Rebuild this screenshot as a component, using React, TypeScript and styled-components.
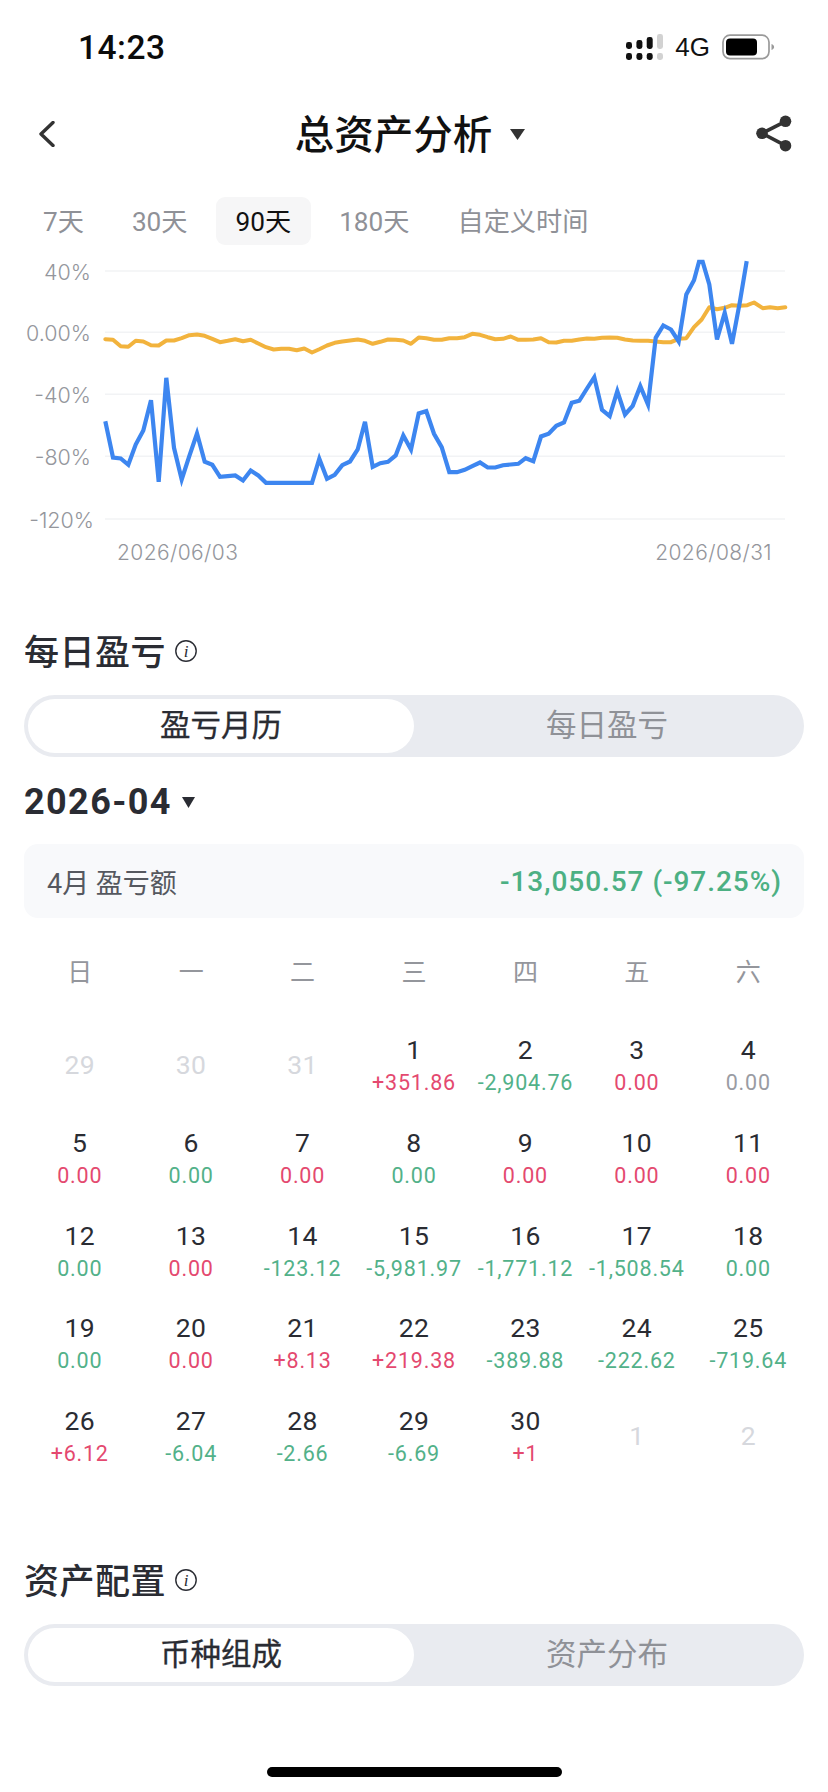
import React from "react";
import styled, { createGlobalStyle } from "styled-components";

const Global = createGlobalStyle`
  html, body { margin: 0; padding: 0; background: #fff; }
  * { box-sizing: border-box; }
`;

const DIGIT_FONT = `Roboto, "Noto Sans CJK SC", sans-serif`;
const CJK_FONT = `"Noto Sans CJK SC", sans-serif`;

const Page = styled.div`
  width: 828px;
  height: 1792px;
  overflow: hidden;
  background: #fff;
  display: flex;
  flex-direction: column;
  font-family: ${CJK_FONT};
`;

const StatusBar = styled.div`
  height: 94px;
  flex: none;
  display: flex;
  align-items: center;
  justify-content: space-between;
  padding: 0 52px 0 78px;
`;
const Clock = styled.span`
  font-family: Roboto, sans-serif;
  font-size: 33.5px;
  font-weight: 500;
  color: #0b0b0b;
  letter-spacing: 0.5px;
`;
const StatusIcons = styled.div`
  display: flex;
  align-items: center;
  gap: 12px;
`;
const Network = styled.span`
  font-family: "Liberation Sans", Arial, sans-serif;
  font-size: 26px;
  color: #111;
`;

const Nav = styled.div`
  height: 80px;
  flex: none;
  display: flex;
  align-items: center;
  justify-content: space-between;
  padding: 0 36px 0 38px;
`;
const TitleGroup = styled.div`
  display: flex;
  align-items: center;
  gap: 18px;
  margin-left: 8px;
`;
const Title = styled.h1`
  margin: 0 0 5px;
  font-family: ${CJK_FONT};
  font-size: 39.5px;
  font-weight: 500;
  line-height: 1;
  color: #111;
`;

const Tabs = styled.div`
  display: flex;
  gap: 8px;
  margin: 23px 0 0 23px;
`;
const Tab = styled.div<{ $active?: boolean }>`
  height: 48px;
  padding: 0 20px 3px;
  display: flex;
  align-items: center;
  border-radius: 9px;
  font-family: ${DIGIT_FONT};
  font-size: 26.2px;
  color: ${(p) => (p.$active ? "#111" : "#8f9197")};
  background: ${(p) => (p.$active ? "#f6f6f7" : "transparent")};
`;

const ChartSvg = styled.svg`
  display: block;
  flex: none;
  margin-top: 5px;
`;
const AxisText = styled.text`
  font-family: "Inter", sans-serif;
  font-weight: 300;
  font-size: 21.5px;
  fill: #94969c;
`;
const DateText = styled(AxisText)`
  font-size: 21px;
  letter-spacing: 0.4px;
`;

const SectionHead = styled.div<{ $top: number }>`
  height: 40px;
  flex: none;
  margin: ${(p) => p.$top}px 0 0 24px;
  display: flex;
  align-items: center;
  gap: 8px;
`;
const SectionTitle = styled.h2`
  margin: 0 0 3px;
  font-size: 35px;
  letter-spacing: 0.5px;
  font-weight: 500;
  line-height: 40px;
  color: #2a2c33;
`;

const Segment = styled.div`
  height: 62px;
  flex: none;
  margin: 24px 24px 0 24px;
  padding: 4px;
  border-radius: 31px;
  background: #e9ebf0;
  display: flex;
`;
const SegItem = styled.div<{ $active?: boolean }>`
  flex: 1;
  padding-bottom: 6px;
  display: flex;
  align-items: center;
  justify-content: center;
  border-radius: 27px;
  font-size: 30.5px;
  font-weight: 400;
  color: ${(p) => (p.$active ? "#2a2c33" : "#8f9197")};
  background: ${(p) => (p.$active ? "#fff" : "transparent")};
  -webkit-text-stroke: ${(p) => (p.$active ? "0.3px #2a2c33" : "0")};
`;

const MonthRow = styled.div`
  height: 40px;
  flex: none;
  margin: 25px 0 0 24px;
  display: flex;
  align-items: center;
  gap: 10px;
`;
const Month = styled.span`
  font-family: Roboto, sans-serif;
  font-size: 36px;
  font-weight: 700;
  letter-spacing: 1.4px;
  color: #2a2c33;
`;

const Summary = styled.div`
  height: 74px;
  flex: none;
  margin: 22px 24px 0 24px;
  padding: 0 22px 0 23px;
  border-radius: 14px;
  background: #f8f9fb;
  display: flex;
  align-items: center;
  justify-content: space-between;
`;
const SummaryLabel = styled.span`
  font-family: ${DIGIT_FONT};
  font-size: 27px;
  color: #55585f;
`;
const SummaryValue = styled.span`
  font-family: Roboto, sans-serif;
  font-size: 28px;
  font-weight: 500;
  letter-spacing: 0.95px;
  color: #4cb083;
`;

const WeekRow = styled.div`
  height: 36px;
  flex: none;
  margin: 34px 24px 0 24px;
  display: grid;
  grid-template-columns: repeat(7, 1fr);
`;
const WeekDay = styled.span`
  text-align: center;
  font-size: 25px;
  line-height: 36px;
  color: #94969c;
`;

const CalendarGrid = styled.div`
  flex: none;
  margin: 44px 24px 0 24px;
  display: grid;
  grid-template-columns: repeat(7, 1fr);
  grid-auto-rows: 66px;
  row-gap: 26.8px;
`;
const Cell = styled.div`
  display: flex;
  flex-direction: column;
  align-items: center;
  justify-content: center;
  font-family: Roboto, sans-serif;
  white-space: nowrap;
`;
const DayNum = styled.span<{ $dim?: boolean }>`
  font-size: 26.5px;
  line-height: 36px;
  letter-spacing: 0.4px;
  color: ${(p) => (p.$dim ? "#d6d8dd" : "#2a2c33")};
`;
const Pnl = styled.span<{ $tone: Tone }>`
  font-size: 21.5px;
  font-weight: 400;
  line-height: 30px;
  letter-spacing: 0.8px;
  color: ${(p) => TONES[p.$tone]};
`;

const HomeBar = styled.div`
  width: 295px;
  height: 10px;
  flex: none;
  margin: auto 0 15px 267px;
  border-radius: 5px;
  background: #000;
`;

type Tone = "up" | "down" | "flat";
const TONES: Record<Tone, string> = { up: "#e4496f", down: "#52b189", flat: "#9a9ca3" };

const toneOf = (v: string, z: Tone): Tone => (v === "0.00" ? z : v[0] === "+" ? "up" : "down");

type Day = { d: number; v?: string; tone?: Tone };
const mk = (d: number, v: string, z: Tone = "up"): Day => ({ d, v, tone: toneOf(v, z) });

const DAYS: Day[] = [
  { d: 29 }, { d: 30 }, { d: 31 },
  mk(1, "+351.86"), mk(2, "-2,904.76"), mk(3, "0.00"), mk(4, "0.00", "flat"),
  mk(5, "0.00"), mk(6, "0.00", "down"), mk(7, "0.00"), mk(8, "0.00", "down"), mk(9, "0.00"), mk(10, "0.00"), mk(11, "0.00"),
  mk(12, "0.00", "down"), mk(13, "0.00"), mk(14, "-123.12"), mk(15, "-5,981.97"), mk(16, "-1,771.12"), mk(17, "-1,508.54"), mk(18, "0.00", "down"),
  mk(19, "0.00", "down"), mk(20, "0.00"), mk(21, "+8.13"), mk(22, "+219.38"), mk(23, "-389.88"), mk(24, "-222.62"), mk(25, "-719.64"),
  mk(26, "+6.12"), mk(27, "-6.04"), mk(28, "-2.66"), mk(29, "-6.69"), mk(30, "+1"),
  { d: 1 }, { d: 2 },
];

const BLUE: [number, number][] = [
  [316,515],[339,624],[362,627],[385,646],[407,585],[430,543],[453,452],[476,697],[499,385],[522,595],[545,690],[568,620],[591,552],[614,637],[637,646],[660,682],[683,680],[706,678],[729,693],[752,663],[775,678],[798,700],[936,700],[958,628],[981,688],[1004,676],[1027,647],[1050,636],[1073,600],[1095,517],[1118,652],[1141,641],[1164,637],[1187,618],[1210,558],[1233,600],
  [1256,492],[1279,485],[1302,553],[1325,593],[1348,668],[1371,668],[1394,661],[1417,650],[1440,639],[1463,654],[1486,654],[1509,647],[1532,645],[1555,643],[1577,626],[1600,635],[1623,561],[1646,553],[1669,529],[1692,519],[1715,460],[1738,454],[1761,417],[1783,383],[1806,481],[1829,500],[1852,425],[1875,495],[1898,469],[1921,410],[1944,465],[1967,265],[1990,228],[2013,240],[2036,276],[2059,135],[2082,92],[2097,37],[2108,37],[2128,105],[2151,270],[2174,190],[2196,283],[2219,160],[2240,35],
];
const ORANGE: [number, number][] = [
  [316,266],[339,268],[362,287],[385,289],[407,271],[430,273],[453,284],[476,285],[499,270],[522,270],[545,263],[568,254],[591,252],[614,256],[637,265],[660,275],[683,271],[706,266],[729,272],[752,268],[775,279],[798,290],[821,297],[844,295],[867,295],[890,299],[913,294],[936,306],[958,296],[981,285],[1004,277],[1027,273],[1050,270],[1073,267],[1095,271],[1118,280],[1141,274],[1164,267],[1187,268],[1210,270],[1233,280],
  [1256,261],[1279,263],[1302,268],[1325,268],[1348,263],[1371,263],[1394,260],[1417,250],[1440,253],[1463,260],[1486,266],[1509,265],[1532,258],[1555,268],[1577,268],[1600,267],[1623,263],[1646,275],[1669,276],[1692,271],[1715,271],[1738,267],[1761,264],[1783,265],[1806,262],[1829,261],[1852,262],[1875,267],[1898,270],[1921,271],[1944,271],[1967,273],[1990,275],[2013,275],[2036,265],[2059,263],[2082,230],[2105,207],[2128,170],[2151,176],[2174,172],[2196,164],[2219,166],[2242,164],[2262,156],[2288,173],[2310,170],[2333,173],[2356,170],
];
const toPath = (pts: [number, number][], dy: number) =>
  pts.map(([x, y]) => `${(x / 3).toFixed(1)},${(y / 3 + dy).toFixed(1)}`).join(" ");

const GRID = [
  { y: 271, label: "40%" },
  { y: 332.3, label: "0.00%" },
  { y: 394.3, label: "-40%" },
  { y: 456.3, label: "-80%" },
  { y: 519, label: "-120%" },
];

const Chart = () => (
  <ChartSvg width={828} height={320} viewBox="0 250 828 320">
    {GRID.map((g) => (
      <g key={g.label}>
        <line x1={105} x2={785} y1={g.y} y2={g.y} stroke="#f2f3f5" strokeWidth={1.4} />
        <AxisText x={g.label === "-120%" ? 94 : 91} y={g.y + 9} textAnchor="end">{g.label}</AxisText>
      </g>
    ))}
    <DateText x={117} y={560}>2026/06/03</DateText>
    <DateText x={772} y={560} textAnchor="end">2026/08/31</DateText>
    <polyline points={toPath(ORANGE, 250.5)} fill="none" stroke="#f2b33d" strokeWidth={4} strokeLinejoin="round" strokeLinecap="round" />
    <polyline points={toPath(BLUE, 249.5)} fill="none" stroke="#3d86f0" strokeWidth={4.2} strokeLinejoin="miter" strokeLinecap="butt" />
  </ChartSvg>
);

const InfoIcon = () => (
  <svg width={24} height={24} viewBox="0 0 24 24">
    <circle cx={12} cy={12} r={10.2} fill="none" stroke="#2a2c33" strokeWidth={1.4} />
    <text x={12} y={18} textAnchor="middle" fontFamily="'Liberation Serif', serif" fontStyle="italic" fontSize={17} fill="#2a2c33">i</text>
  </svg>
);

const Caret = ({ w, h, color }: { w: number; h: number; color: string }) => (
  <svg width={w} height={h} viewBox={`0 0 ${w} ${h}`}>
    <polygon points={`0,0 ${w},0 ${w / 2},${h}`} fill={color} />
  </svg>
);

const Signal = () => (
  <svg width={37} height={26} viewBox="0 0 37 26">
    <rect x={0} y={8} width={6} height={7} rx={2.4} fill="#111" />
    <rect x={0} y={19} width={6} height={7} rx={2.4} fill="#111" />
    <rect x={10.4} y={6} width={6} height={9} rx={2.4} fill="#111" />
    <rect x={10.4} y={19} width={6} height={7} rx={2.4} fill="#111" />
    <rect x={20.7} y={3} width={6} height={12} rx={2.4} fill="#111" />
    <rect x={20.7} y={19} width={6} height={7} rx={2.4} fill="#111" />
    <rect x={31} y={0} width={6} height={15} rx={2.4} fill="#d2d2d2" />
    <rect x={31} y={19} width={6} height={7} rx={2.4} fill="#d2d2d2" />
  </svg>
);

const Battery = () => (
  <svg width={54} height={26} viewBox="0 0 54 26">
    <rect x={1} y={1.2} width={46} height={23.4} rx={7} fill="none" stroke="#9a9a9a" strokeWidth={1.7} />
    <rect x={4} y={4.5} width={31} height={17} rx={4} fill="#000" />
    <path d="M49.5 10c1.6.5 2.6 1.6 2.6 3s-1 2.5-2.6 3z" fill="#9a9a9a" />
  </svg>
);

const BackIcon = () => (
  <svg width={18} height={26} viewBox="0 0 18 26">
    <polyline points="15,1.5 3,13 15,24.5" fill="none" stroke="#333" strokeWidth={3.4} strokeLinecap="round" strokeLinejoin="round" />
  </svg>
);

const ShareIcon = () => (
  <svg width={36} height={38} viewBox="0 0 36 38">
    <line x1={6} y1={18.3} x2={29.5} y2={6.3} stroke="#333" strokeWidth={3.6} />
    <line x1={6} y1={18.3} x2={29.5} y2={30.7} stroke="#333" strokeWidth={3.6} />
    <circle cx={6} cy={18.3} r={5.8} fill="#333" />
    <circle cx={29.5} cy={6.3} r={5.8} fill="#333" />
    <circle cx={29.5} cy={30.7} r={5.8} fill="#333" />
  </svg>
);

export default function App() {
  return (
    <Page>
      <Global />
      <StatusBar>
        <Clock>14:23</Clock>
        <StatusIcons>
          <Signal />
          <Network>4G</Network>
          <Battery />
        </StatusIcons>
      </StatusBar>
      <Nav>
        <BackIcon />
        <TitleGroup>
          <Title>总资产分析</Title>
          <Caret w={15} h={11} color="#333" />
        </TitleGroup>
        <ShareIcon />
      </Nav>
      <Tabs>
        <Tab>7天</Tab>
        <Tab>30天</Tab>
        <Tab $active>90天</Tab>
        <Tab>180天</Tab>
        <Tab>自定义时间</Tab>
      </Tabs>
      <Chart />
      <SectionHead $top={61}>
        <SectionTitle>每日盈亏</SectionTitle>
        <InfoIcon />
      </SectionHead>
      <Segment>
        <SegItem $active>盈亏月历</SegItem>
        <SegItem>每日盈亏</SegItem>
      </Segment>
      <MonthRow>
        <Month>2026-04</Month>
        <Caret w={13} h={11} color="#2a2c33" />
      </MonthRow>
      <Summary>
        <SummaryLabel>4月 盈亏额</SummaryLabel>
        <SummaryValue>-13,050.57 (-97.25%)</SummaryValue>
      </Summary>
      <WeekRow>
        {["日", "一", "二", "三", "四", "五", "六"].map((w) => (
          <WeekDay key={w}>{w}</WeekDay>
        ))}
      </WeekRow>
      <CalendarGrid>
        {DAYS.map((c, i) => (
          <Cell key={i}>
            <DayNum $dim={!c.v}>{c.d}</DayNum>
            {c.v && <Pnl $tone={c.tone!}>{c.v}</Pnl>}
          </Cell>
        ))}
      </CalendarGrid>
      <SectionHead $top={91}>
        <SectionTitle>资产配置</SectionTitle>
        <InfoIcon />
      </SectionHead>
      <Segment>
        <SegItem $active>币种组成</SegItem>
        <SegItem>资产分布</SegItem>
      </Segment>
      <HomeBar />
    </Page>
  );
}
